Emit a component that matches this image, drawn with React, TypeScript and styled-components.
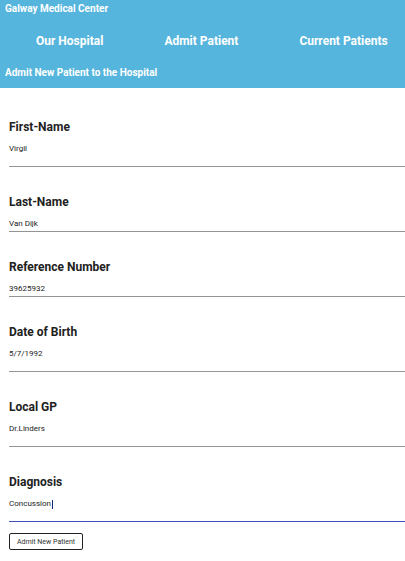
import React from "react";
import styled, { createGlobalStyle } from "styled-components";

const GlobalStyle = createGlobalStyle`
  html, body {
    margin: 0;
    padding: 0;
    background: #ffffff;
    font-family: Roboto, "Liberation Sans", Arial, sans-serif;
  }
  * { box-sizing: border-box; }
`;

const Header = styled.header`
  background: #56b5dc;
  color: #ffffff;
  height: 88px;
  display: flex;
  flex-direction: column;
`;

const Brand = styled.div`
  font-size: 10px;
  line-height: 12px;
  font-weight: 700;
  padding: 3px 0 0 5px;
`;

const Nav = styled.nav`
  display: flex;
  gap: 61px;
  padding: 19px 0 0 36px;
  white-space: nowrap;
`;

const NavLink = styled.a`
  font-size: 12px;
  line-height: 14px;
  font-weight: 700;
  color: #ffffff;
  text-decoration: none;
`;

const SubTitle = styled.h1`
  margin: 19px 0 0 5px;
  font-size: 10px;
  line-height: 12px;
  font-weight: 700;
`;

const Form = styled.form`
  display: flex;
  flex-direction: column;
  padding: 32px 0 0 9px;
  gap: 28px;
`;

const Field = styled.div`
  display: flex;
  flex-direction: column;
`;

const Label = styled.label`
  font-size: 12px;
  line-height: 14px;
  font-weight: 700;
  color: #212121;
`;

const InputBox = styled.div<{ $focused?: boolean; $tall?: boolean }>`
  margin-top: 10px;
  padding-bottom: ${(p) => (p.$tall ? "12px" : "2px")};
  border-bottom: 1px solid ${(p) => (p.$focused ? "#3f51b5" : "#949494")};
  font-size: 8px;
  line-height: 10px;
  color: #222222;
  display: flex;
  align-items: center;
`;

const Caret = styled.span`
  display: inline-block;
  width: 1px;
  height: 9px;
  background: #1a237e;
  margin-left: 1px;
`;

const Button = styled.button`
  align-self: flex-start;
  margin-top: -17px;
  width: 74px;
  height: 17px;
  padding: 0;
  border: 1px solid #222222;
  border-radius: 2px;
  background: #ffffff;
  font-family: Roboto, "Liberation Sans", Arial, sans-serif;
  font-size: 7px;
  color: #333333;
`;

const fields = [
  { label: "First-Name", value: "Virgil", tall: true },
  { label: "Last-Name", value: "Van Dijk", tall: false },
  { label: "Reference Number", value: "39625932", tall: false },
  { label: "Date of Birth", value: "5/7/1992", tall: true },
  { label: "Local GP", value: "Dr.Linders", tall: true },
  { label: "Diagnosis", value: "Concussion", tall: true, focused: true },
];

export default function App() {
  return (
    <>
      <GlobalStyle />
      <Header>
        <Brand>Galway Medical Center</Brand>
        <Nav>
          <NavLink>Our Hospital</NavLink>
          <NavLink>Admit Patient</NavLink>
          <NavLink>Current Patients</NavLink>
        </Nav>
        <SubTitle>Admit New Patient to the Hospital</SubTitle>
      </Header>
      <Form onSubmit={(e) => e.preventDefault()}>
        {fields.map((f) => (
          <Field key={f.label}>
            <Label>{f.label}</Label>
            <InputBox $tall={f.tall} $focused={f.focused}>
              {f.value}
              {f.focused && <Caret />}
            </InputBox>
          </Field>
        ))}
        <Button type="button">Admit New Patient</Button>
      </Form>
    </>
  );
}
